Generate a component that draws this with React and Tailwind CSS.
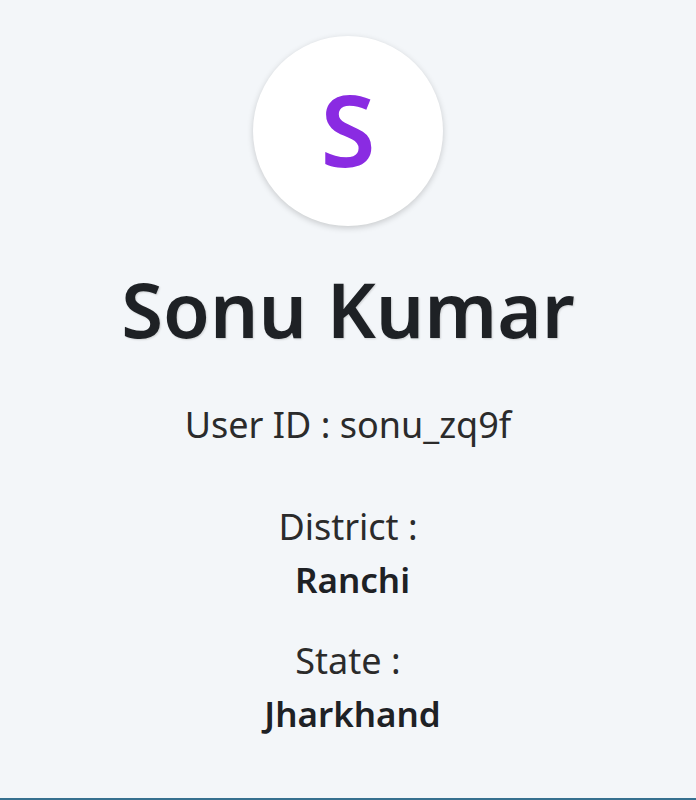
export default function App() {
  return (
    <div
      className="min-h-[800px] bg-[#f3f6f9] border-b-2 border-[#36708f] flex flex-col items-center text-[#2b2b2b]"
      style={{ fontFamily: '"Noto Sans", "Open Sans", sans-serif' }}
    >
      {/* avatar */}
      <div className="mt-[36px] w-[190px] h-[190px] rounded-full bg-white shadow-[0_2px_6px_rgba(0,0,0,0.18)] flex items-center justify-center">
        <span className="text-[100px] font-semibold leading-none text-[#8a2be2] -mt-[6px]">S</span>
      </div>

      <h1 className="mt-[45px] text-[76px] font-semibold leading-none text-[#1e2125] [text-shadow:1px_1px_2px_rgba(0,0,0,0.15)]">
        Sonu Kumar
      </h1>

      <p className="mt-[60px] text-[36px] leading-none">User ID : sonu_zq9f</p>

      <div className="mt-[66px] flex flex-col items-center">
        <span className="text-[36px] leading-none">District :</span>
        <span className="mt-[17px] text-[35px] font-semibold leading-none text-[#1e2125]">{'\u00a0'}Ranchi</span>
      </div>

      <div className="mt-[46px] flex flex-col items-center">
        <span className="text-[36px] leading-none">State :</span>
        <span className="mt-[17px] text-[35px] font-semibold leading-none text-[#1e2125]">{'\u00a0'}Jharkhand</span>
      </div>
    </div>
  )
}
